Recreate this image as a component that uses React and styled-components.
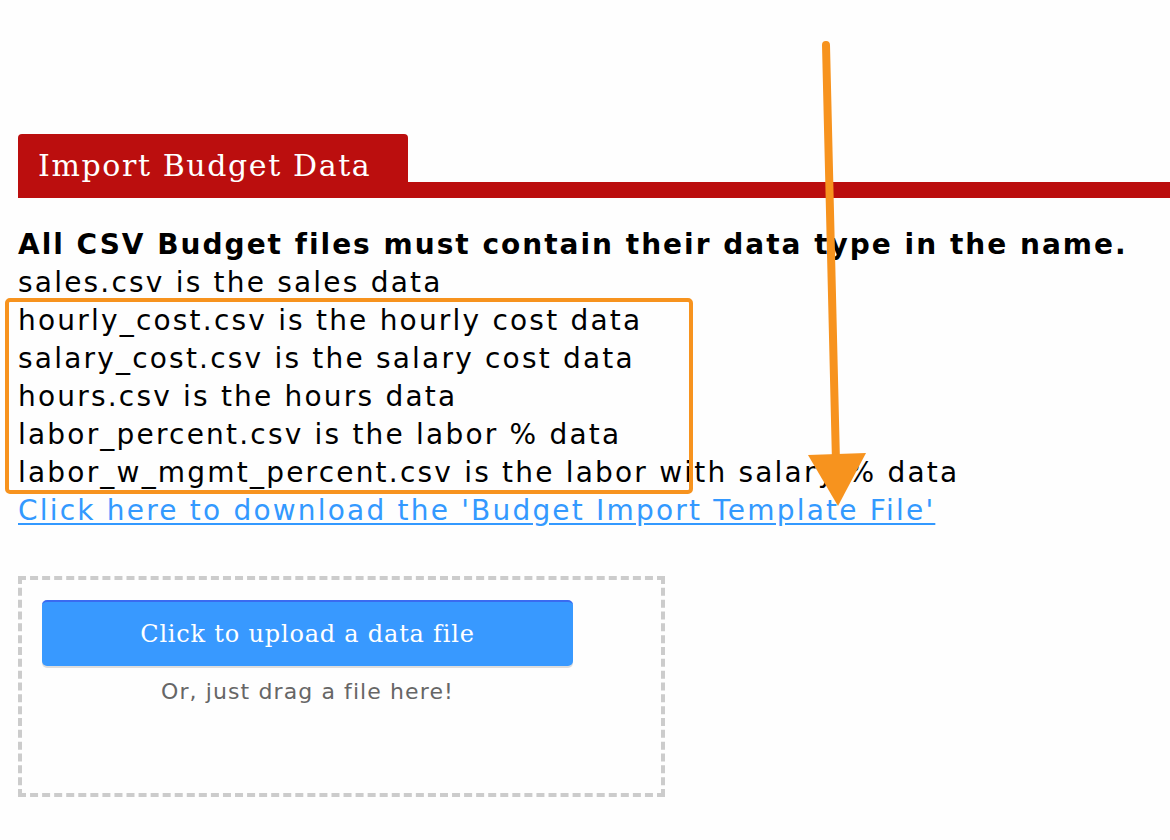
import styled, { createGlobalStyle } from "styled-components";

const GlobalStyle = createGlobalStyle`
  html, body {
    margin: 0;
    padding: 0;
    background: #fefefe;
  }
  body {
    font-family: "DejaVu Sans", Verdana, sans-serif;
    color: #000;
  }
`;

const Page = styled.div`
  position: relative;
  width: 1170px;
  height: 840px;
  padding: 134px 0 0 18px;
  box-sizing: border-box;
  overflow: hidden;
`;

const TabRow = styled.div`
  display: flex;
  border-bottom: 16px solid #bb0e0e;
`;

const Tab = styled.div`
  width: 390px;
  height: 48px;
  box-sizing: border-box;
  padding: 14px 0 0 20px;
  background: #bb0e0e;
  border-radius: 4px 4px 0 0;
  color: #fff;
  font-family: "DejaVu Serif", Georgia, serif;
  font-size: 30px;
  line-height: 36px;
  letter-spacing: 1.6px;
  white-space: nowrap;
`;

const Info = styled.div`
  margin-top: 28px;
  font-size: 28px;
  line-height: 38px;
  letter-spacing: 2.2px;
`;

const Heading = styled.div`
  font-weight: bold;
  letter-spacing: 2px;
  white-space: nowrap;
`;

const Line = styled.div`
  white-space: nowrap;
`;

const DownloadLink = styled.a`
  color: #3399ff;
  text-decoration: underline;
  text-underline-offset: 3px;
  cursor: pointer;
`;

const DropZone = styled.div`
  margin-top: 46px;
  width: 647px;
  height: 221px;
  box-sizing: border-box;
  border: 4px dashed #cccccc;
  padding: 20px;
  display: flex;
  flex-direction: column;
  align-items: stretch;
`;

const UploadButton = styled.button`
  width: 531px;
  height: 66px;
  border: none;
  border-top: 2px solid #3a6af0;
  border-radius: 5px;
  background: #3899ff;
  box-shadow: 0 2px 0 #dddddd;
  color: #fff;
  font-family: "DejaVu Serif", Georgia, serif;
  font-size: 24px;
  letter-spacing: 0.8px;
  cursor: pointer;
`;

const DragHint = styled.div`
  margin-top: 10px;
  width: 531px;
  text-align: center;
  color: #666;
  font-size: 22px;
  line-height: 32px;
  letter-spacing: 1.1px;
`;

const Overlay = styled.svg`
  position: absolute;
  inset: 0;
  pointer-events: none;
`;

const files = [
  "hourly_cost.csv is the hourly cost data",
  "salary_cost.csv is the salary cost data",
  "hours.csv is the hours data",
  "labor_percent.csv is the labor % data",
  "labor_w_mgmt_percent.csv is the labor with salary % data",
];

export default function App() {
  return (
    <>
      <GlobalStyle />
      <Page>
        <TabRow>
          <Tab>Import Budget Data</Tab>
        </TabRow>
        <Info>
          <Heading>All CSV Budget files must contain their data type in the name.</Heading>
          <Line>sales.csv is the sales data</Line>
          {files.map((f) => (
            <Line key={f}>{f}</Line>
          ))}
          <Line>
            <DownloadLink>Click here to download the 'Budget Import Template File'</DownloadLink>
          </Line>
        </Info>
        <DropZone>
          <UploadButton>Click to upload a data file</UploadButton>
          <DragHint>Or, just drag a file here!</DragHint>
        </DropZone>

        {/* annotation overlay */}
        <Overlay width="1170" height="840" viewBox="0 0 1170 840">
          <rect x="7" y="300" width="684" height="192" rx="3" fill="none" stroke="#f7931e" strokeWidth="4" />
          <line x1="826" y1="45" x2="836" y2="462" stroke="#f7931e" strokeWidth="8" strokeLinecap="round" />
          <polygon points="808,455 866,453 838,506" fill="#f7931e" />
        </Overlay>
      </Page>
    </>
  );
}
